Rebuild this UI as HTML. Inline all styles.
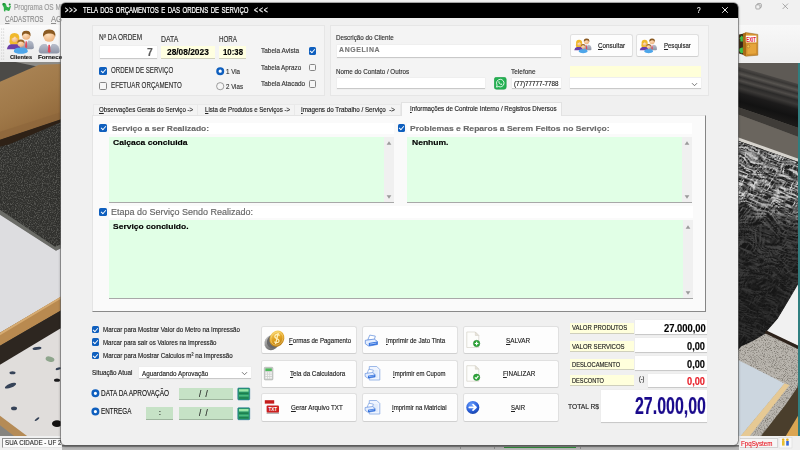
<!DOCTYPE html>
<html lang="pt-BR">
<head>
<meta charset="utf-8">
<title>Tela dos Orçamentos e das Ordens de Serviço</title>
<style>
html,body{margin:0;padding:0;background:#f0f0f0;}
body{width:800px;height:450px;overflow:hidden;font-family:"Liberation Sans",Arial,sans-serif;}
#root{position:relative;width:800px;height:450px;overflow:hidden;background:#f1f1f1;}
#root *{box-sizing:border-box;}
.a{position:absolute;}
.t{position:absolute;white-space:nowrap;transform-origin:0 50%;display:inline-block;-webkit-text-stroke:0.16px currentColor;}
.t u{text-decoration:underline;text-decoration-thickness:0.5px;text-underline-offset:0.5px;}
.gb{position:absolute;background:#f4f4f4;border:1px solid #e6e6e6;}
.in{position:absolute;background:#fff;border-bottom:1px solid #c9c9c9;box-shadow:0 0 0 0.5px #e9e9e9;}
.yl{position:absolute;background:#ffffe1;border-bottom:1px solid #cfcfbc;}
.btn{position:absolute;background:#fdfdfd;border:1px solid #e0e0e0;border-bottom-color:#d0d0d0;border-radius:2.5px;}
.cb{position:absolute;width:7.5px;height:7.5px;border-radius:1.6px;}
.cb.on{background:#0f5fbe;}
.cb.on::after{content:"";position:absolute;left:2.5px;top:1.1px;width:2.1px;height:3.9px;border:solid #fff;border-width:0 0.9px 0.9px 0;transform:rotate(42deg);}
.cb.off{background:#f6f6f6;border:0.8px solid #858585;}
.rd{position:absolute;width:8px;height:8px;border-radius:50%;}
.rd.on{background:#fff;border:2.7px solid #0f5fbe;width:8.4px;height:8.4px;}
.rd.off{background:#f6f6f6;border:0.8px solid #858585;}
.memo{position:absolute;background:#e1ffe6;border-bottom:1px solid #a8a8a8;}
.sb{position:absolute;right:0;top:0;bottom:0;width:10px;background:#f0f0f0;}
.lbl{position:absolute;background:#fff;}
.grn{position:absolute;background:#c6e2c6;border-bottom:1px solid #9db49d;}
</style>
</head>
<body>

<div id="root">
<!-- ===== main application window (behind) ===== -->
<div class="a" id="appbar" style="left:0;top:0;width:800px;height:25px;background:#f1f1f1;"></div>
<div class="a" style="left:0;top:24.5px;width:800px;height:1px;background:#d9d9d9;"></div>
<div class="a" id="tool-l" style="left:0;top:25px;width:70px;height:37px;background:linear-gradient(#fbfbfb,#ececec);"></div>
<div class="a" id="tool-r" style="left:730px;top:25px;width:70px;height:37px;background:linear-gradient(#f8f8f8,#eeeeee);"></div>

<!-- left photo -->
<svg class="a" id="photo-l" style="left:0;top:62.3px;" width="70" height="373.3" viewBox="0 62.3 70 373.3">
  <defs>
    <filter id="nz" color-interpolation-filters="sRGB" x="0" y="0" width="100%" height="100%">
      <feTurbulence type="fractalNoise" baseFrequency="0.85" numOctaves="2" seed="3" result="n"/>
      <feColorMatrix in="n" type="matrix" values="0 0 0 0 0.55  0 0 0 0 0.55  0 0 0 0 0.53  1.3 0 0 0 -0.56"/>
      <feComposite operator="in" in2="SourceGraphic"/>
    </filter>
    <linearGradient id="tan" x1="0" y1="0" x2="0.5" y2="1">
      <stop offset="0" stop-color="#ad8758"/><stop offset="0.55" stop-color="#a07949"/><stop offset="0.85" stop-color="#946c3e"/><stop offset="1" stop-color="#7c572e"/>
    </linearGradient>
  </defs>
  <rect x="0" y="62" width="70" height="375" fill="#3b3a37"/>
  <polygon points="0,62 70,62 70,66 0,84" fill="#4b4a47"/>
  <polygon points="14,62 70,62 70,65 36,66.5" fill="#8d8c88"/>
  <polygon points="0,82 39,65 70,64 70,116.500 0,140" fill="url(#tan)"/>
  <polygon points="0,132 70,109.500 70,116.500 0,140" fill="#8d673c" opacity="0.75"/>
  <polygon points="0,140 70,116.500 70,118.500 11,144 0,150" fill="#2e2116"/>
  <polygon points="0,147 11,144 70,119 70,242 55,247 0,210" fill="#30302d"/>
  <polygon points="0,147 11,144 70,119 70,242 55,247 0,210" fill="#fff" filter="url(#nz)"/>
  <polygon points="0,210 55,247 70,241 70,244 56,251 0,215" fill="#6b6c67"/>
  <polygon points="0,215 56,251 70,244 70,292 0,333" fill="#dddde0"/>
  <polygon points="0,333 70,291.500 70,305.500 0,346" fill="#b98a50"/>
  <polygon points="0,333 70,291.500 70,293.500 0,335.500" fill="#d6ab72"/>
  <polygon points="0,346 70,305.500 70,323 0,365" fill="#2d2620"/>
  <polygon points="0,365 70,323 70,437 0,437" fill="#e0dddb"/>
  <g fill="#364358">
    <ellipse cx="37" cy="348.600" rx="4.500" ry="1.400" transform="rotate(-8 37 348.600)"/>
    <ellipse cx="10.500" cy="386" rx="6" ry="2" transform="rotate(-22 10.500 386)"/>
    <ellipse cx="12.500" cy="373" rx="3" ry="1.500"/>
    <ellipse cx="58.500" cy="369" rx="3" ry="1.200" transform="rotate(-15 58.500 369)"/>
    <ellipse cx="14" cy="408.700" rx="3" ry="1.800"/>
    <ellipse cx="37" cy="419.500" rx="2.800" ry="1" transform="rotate(-35 37 419.500)"/>
  </g>
  <ellipse cx="57" cy="380.500" rx="3" ry="1.600" fill="#1b1a1c"/>
  <ellipse cx="50" cy="359.500" rx="4.500" ry="2.600" fill="#8ea58c" transform="rotate(15 50 359.500)"/>
  <ellipse cx="57" cy="424" rx="5" ry="3.400" fill="#131110"/>
  <polygon points="0,416 28,437 0,437" fill="#b58b56"/>
  <polygon points="0,425.500 15,437 0,437" fill="#85837e"/>
</svg>

<!-- right photo -->
<svg class="a" id="photo-r" style="left:730px;top:62.6px;" width="70" height="373.2" viewBox="730 62.600 70 373.200">
  <defs>
    <linearGradient id="cyl" gradientUnits="userSpaceOnUse" x1="762" y1="73" x2="751" y2="112">
      <stop offset="0" stop-color="#4c4946"/><stop offset="0.08" stop-color="#393735"/><stop offset="0.16" stop-color="#575450"/><stop offset="0.24" stop-color="#333130"/><stop offset="0.32" stop-color="#4f4c49"/><stop offset="0.4" stop-color="#2b2a29"/><stop offset="0.5" stop-color="#3b3937"/><stop offset="0.62" stop-color="#1c1b1b"/><stop offset="0.82" stop-color="#121212"/><stop offset="1" stop-color="#1b1a19"/>
    </linearGradient>
    <filter id="fur" color-interpolation-filters="sRGB" x="0" y="0" width="100%" height="100%">
      <feTurbulence type="fractalNoise" baseFrequency="0.07 0.85" numOctaves="3" seed="8" result="n"/>
      <feTurbulence type="fractalNoise" baseFrequency="0.035" numOctaves="2" seed="2" result="d"/>
      <feDisplacementMap in="n" in2="d" scale="18" xChannelSelector="R" yChannelSelector="G" result="w"/>
      <feColorMatrix in="w" type="matrix" values="0 0 0 0 0.85  0 0 0 0 0.85  0 0 0 0 0.85  3.6 0 0 0 -1.5"/>
      <feComposite operator="in" in2="SourceGraphic"/>
    </filter>
    <filter id="fur2" color-interpolation-filters="sRGB" x="0" y="0" width="100%" height="100%">
      <feTurbulence type="fractalNoise" baseFrequency="0.1 0.95" numOctaves="2" seed="21" result="n"/>
      <feTurbulence type="fractalNoise" baseFrequency="0.03" numOctaves="2" seed="5" result="d"/>
      <feDisplacementMap in="n" in2="d" scale="22" xChannelSelector="G" yChannelSelector="R" result="w"/>
      <feColorMatrix in="w" type="matrix" values="0 0 0 0 0.9  0 0 0 0 0.9  0 0 0 0 0.9  4 0 0 0 -2.1"/>
      <feComposite operator="in" in2="SourceGraphic"/>
    </filter>
    <filter id="gr" color-interpolation-filters="sRGB" x="0" y="0" width="100%" height="100%">
      <feTurbulence type="fractalNoise" baseFrequency="1.1" numOctaves="2" seed="5" result="n"/>
      <feColorMatrix in="n" type="matrix" values="0 0 0 0 0.3  0 0 0 0 0.28  0 0 0 0 0.25  1.7 0 0 0 -0.8"/>
      <feComposite operator="in" in2="SourceGraphic"/>
    </filter>
  </defs>
  <rect x="730" y="62" width="70" height="375" fill="#1c1c1c"/>
  <rect x="730" y="62" width="70" height="100" fill="#5e5a55"/>
  <polygon points="730,64 800,84 800,128 730,104" fill="url(#cyl)"/>
  <polygon points="730,104 800,128 800,137 730,111" fill="#3f3c38"/>
  <polygon points="730,111 800,137 800,160 730,137" fill="#6a655e"/>
  <polygon points="730,134.200 800,158.800 800,162 730,137.600" fill="#d6d3cd"/>
  <polygon points="730,137.600 800,162 800,283 778,318 766,333 752,341 741,346 730,346" fill="#1d1d1d"/>
  <clipPath id="furclip"><polygon points="730,138 800,162.500 800,283 778,318 766,333 752,341 741,346 730,346"/></clipPath>
  <g clip-path="url(#furclip)"><g transform="rotate(20 768 240)"><rect x="690" y="120" width="160" height="260" fill="#fff" filter="url(#fur)"/></g><g transform="rotate(-55 768 240)"><rect x="640" y="120" width="260" height="260" fill="#fff" filter="url(#fur2)"/></g></g>
  <linearGradient id="furfade" gradientUnits="userSpaceOnUse" x1="760" y1="150" x2="745" y2="300"><stop offset="0" stop-color="#141414" stop-opacity="0.1"/><stop offset="0.3" stop-color="#141414" stop-opacity="0"/><stop offset="0.5" stop-color="#141414" stop-opacity="0.72"/><stop offset="1" stop-color="#141414" stop-opacity="0.85"/></linearGradient>
  <polygon points="730,137.600 800,162 800,283 778,318 766,333 752,341 741,346 730,346" fill="url(#furfade)"/>
  <polygon points="741,346 752,341 766,333 778,318 800,283 800,437 730,437 730,346" fill="#b9b5ae"/>
  <polygon points="741,346 752,341 766,333 778,318 800,283 800,437 730,437 730,346" fill="#fff" filter="url(#gr)"/>
  <polygon points="730,300 741,346 730,360" fill="#1d1d1d"/>
  <polygon points="766.500,331 778,318 798,284 800,283 800,346" fill="#f1f1f1"/>
  <polygon points="766.500,330 800,346 800,349.500 764.500,332.500" fill="#2e231b"/>
  <polygon points="730,355.500 784.400,383 740,436.500 730,437" fill="#ccd6df"/>
  <polygon points="784.400,383 789.500,384.500 749,436.500 740,436.500" fill="#e6c994"/>
  <polygon points="800,383 800,437 760,437 785,405" fill="#4a3e2c"/>
  <polygon points="800,412 800,437 785,437" fill="#dba552"/>
</svg>
<div class="a" style="left:797.5px;top:62.6px;width:3px;height:373.2px;background:#2f7f80;"></div>

<!-- status bar -->
<div class="a" id="status" style="left:0;top:435.6px;width:800px;height:15px;background:#f0f0f0;"></div>
<div class="a" style="left:1.8px;top:438px;width:75px;height:9.6px;background:#fbfbfb;border:1px solid #8f8f8f;border-right-color:#ddd;border-bottom-color:#e4e4e4;"></div>
<div class="a" style="left:740px;top:437.6px;width:38.4px;height:10.4px;background:#f6f6f6;border:1px solid #d4d4d4;border-left:none;"></div>
<div class="a" style="left:62px;top:444.5px;width:677px;height:6px;background:linear-gradient(#6f6f6f 0,#8a8a8a 1.5px,#b3b3b3 2px,#b9b9b9 100%);"></div>
<div class="a" style="left:504px;top:446.6px;width:72px;height:1.2px;background:#2f8f3a;"></div>
<div class="a" style="left:460px;top:446px;width:1px;height:3px;background:#8a8a8a;"></div><div class="a" style="left:494px;top:446px;width:1px;height:3px;background:#8a8a8a;"></div><div class="a" style="left:580px;top:446px;width:1px;height:3px;background:#8a8a8a;"></div>

<!-- ===== dialog ===== -->
<div class="a" id="dlg" style="left:61.4px;top:2.5px;width:677px;height:442px;background:#f0f0f0;border-radius:4.5px;box-shadow:0 0 0 0.6px #6b6b6b,0 1px 3px rgba(0,0,0,.55);overflow:hidden;">
  <div class="a" style="left:0;top:0;width:100%;height:15.2px;background:#000;"></div>
</div>

<!-- group box 1 -->
<div class="gb" style="left:92px;top:24.5px;width:232.5px;height:71.5px;"></div>
<!-- group box 2 -->
<div class="gb" style="left:329.5px;top:24.5px;width:379.2px;height:71.5px;"></div>

<!-- header inputs -->
<div class="in" style="left:100px;top:45.5px;width:56.5px;height:13.5px;"></div>
<div class="yl" style="left:161px;top:45.5px;width:53.5px;height:13px;"></div>
<div class="yl" style="left:218.8px;top:45.5px;width:27.7px;height:13px;"></div>

<div class="cb on"  style="left:99.3px;top:67.2px;"></div>
<div class="cb off" style="left:99.3px;top:82.3px;"></div>
<div class="cb on"  style="left:308.8px;top:47.2px;"></div>
<div class="cb off" style="left:308.8px;top:63.7px;"></div>
<div class="cb off" style="left:308.8px;top:80.2px;"></div>

<div class="in" style="left:337px;top:45px;width:223.5px;height:12.5px;"></div>
<div class="in" style="left:337px;top:77.8px;width:147.5px;height:11.7px;"></div>
<div class="in" style="left:512px;top:77.8px;width:48.5px;height:11.7px;"></div>
<div class="a"  style="left:569.5px;top:66px;width:131px;height:10.5px;background:#ffffd9;"></div>
<div class="in" style="left:569.5px;top:77.8px;width:131px;height:11.7px;"></div>
<svg class="a" style="left:690.5px;top:81.5px;" width="7" height="5" viewBox="0 0 7 5"><path d="M1 1.2 L3.5 3.7 L6 1.2" fill="none" stroke="#555" stroke-width="0.8"/></svg>

<!-- whatsapp -->
<svg class="a" style="left:494px;top:77.3px;" width="12.5" height="12.5" viewBox="0 0 25 25">
  <rect x="0.5" y="0.5" width="24" height="24" rx="4.5" fill="#24b152"/>
  <rect x="0.5" y="0.5" width="24" height="24" rx="4.5" fill="none" stroke="#17903f" stroke-width="1"/>
  <path d="M12.6 4.6a7.6 7.6 0 0 0-6.5 11.5L5 20.2l4.2-1.1a7.6 7.6 0 1 0 3.4-14.5z" fill="none" stroke="#fff" stroke-width="1.7"/>
  <path d="M9.6 8.4c-.5.5-1 1.300-.5 2.600.7 1.800 2.500 3.700 4.700 4.500 1.100.4 1.900-.1 2.400-.7.300-.4.200-.8-.1-1l-1.500-.8c-.3-.1-.6 0-.8.300l-.4.500c-1.300-.5-2.300-1.500-2.900-2.700l.5-.5c.2-.2.300-.5.100-.8L10.400 8.400c-.2-.3-.6-.3-.8 0z" fill="#fff"/>
</svg>

<!-- consult / search buttons -->
<div class="btn" style="left:570px;top:33.6px;width:63.3px;height:23.8px;"></div>
<div class="btn" style="left:635.6px;top:33.6px;width:63.3px;height:23.8px;"></div>

<!-- tab strip -->
<div class="a" style="left:92.5px;top:103.5px;width:105px;height:12px;background:#f3f3f3;border:1px solid #e9e9e9;border-bottom:none;"></div>
<div class="a" style="left:197.5px;top:103.5px;width:97px;height:12px;background:#f3f3f3;border:1px solid #e9e9e9;border-bottom:none;border-left:none;"></div>
<div class="a" style="left:294.5px;top:103.5px;width:106px;height:12px;background:#f3f3f3;border:1px solid #e9e9e9;border-bottom:none;border-left:none;"></div>
<!-- tab page -->
<div class="a" id="page" style="left:92.2px;top:115px;width:613.8px;height:197px;background:#fafafa;border:1px solid #e4e4e4;border-right:1.6px solid #858585;border-bottom:1.8px solid #8a8a8a;"></div>
<div class="a" style="left:400.5px;top:102.2px;width:161px;height:13.8px;background:#fafafa;border:1px solid #e2e2e2;border-bottom:none;"></div>

<!-- section 1 -->
<div class="cb on" style="left:99.3px;top:124.2px;"></div>
<div class="lbl" style="left:109px;top:122.8px;width:285px;height:10.8px;"></div>
<div class="memo" style="left:109px;top:136.7px;width:285px;height:66.3px;"><div class="sb"></div></div>
<!-- section 2 -->
<div class="cb on" style="left:397.5px;top:124.2px;"></div>
<div class="lbl" style="left:407px;top:122.8px;width:285px;height:10.8px;"></div>
<div class="memo" style="left:407px;top:136.7px;width:285px;height:66.3px;"><div class="sb"></div></div>
<!-- section 3 -->
<div class="cb on" style="left:99.2px;top:208.3px;"></div>
<div class="lbl" style="left:109px;top:206px;width:584px;height:11.5px;"></div>
<div class="memo" style="left:109px;top:219.8px;width:584px;height:79.2px;"><div class="sb"></div></div>

<!-- scrollbar arrows -->
<svg class="a" style="left:0;top:0;" width="800" height="450" viewBox="0 0 800 450" pointer-events="none">
  <g fill="#9a9a9a">
    <polygon points="386.6,144.7 391.4,144.7 389,141.3"/>
    <polygon points="386.6,195.3 391.4,195.3 389,198.7"/>
    <polygon points="684.6,144.7 689.4,144.7 687,141.3"/>
    <polygon points="684.6,195.3 689.4,195.3 687,198.7"/>
    <polygon points="685.6,228.7 690.4,228.7 688,225.3"/>
    <polygon points="685.6,291.3 690.4,291.3 688,294.7"/>
  </g>
</svg>

<!-- bottom-left options -->
<div class="cb on" style="left:91.5px;top:325.5px;"></div>
<div class="cb on" style="left:91.5px;top:338.4px;"></div>
<div class="cb on" style="left:91.5px;top:351.6px;"></div>
<div class="in" style="left:139.2px;top:367.3px;width:111.4px;height:11.5px;"></div>
<svg class="a" style="left:241px;top:371px;" width="7" height="5" viewBox="0 0 7 5"><path d="M1 1.2 L3.5 3.7 L6 1.2" fill="none" stroke="#555" stroke-width="0.8"/></svg>
<div class="grn" style="left:178.5px;top:387.8px;width:54px;height:12.4px;"></div>
<div class="grn" style="left:145.8px;top:407.2px;width:27.6px;height:12.4px;"></div>
<div class="grn" style="left:178.5px;top:407.2px;width:54px;height:12.4px;"></div>

<!-- action buttons -->
<div class="btn" style="left:260.8px;top:325.9px;width:96.6px;height:28.6px;"></div>
<div class="btn" style="left:260.8px;top:359.6px;width:96.6px;height:28.5px;"></div>
<div class="btn" style="left:260.8px;top:393.4px;width:96.6px;height:28.5px;"></div>
<div class="btn" style="left:361.5px;top:325.9px;width:96.6px;height:28.6px;"></div>
<div class="btn" style="left:361.5px;top:359.6px;width:96.6px;height:28.5px;"></div>
<div class="btn" style="left:361.5px;top:393.4px;width:96.6px;height:28.5px;"></div>
<div class="btn" style="left:462.7px;top:325.9px;width:96.8px;height:28.6px;"></div>
<div class="btn" style="left:462.7px;top:359.6px;width:96.8px;height:28.5px;"></div>
<div class="btn" style="left:462.7px;top:393.4px;width:96.8px;height:28.5px;"></div>

<!-- totals -->
<div class="yl" style="left:570px;top:323.4px;width:63.6px;height:11px;background:#ffffdc;"></div>
<div class="yl" style="left:570px;top:341px;width:63.6px;height:11.2px;background:#ffffdc;"></div>
<div class="yl" style="left:570px;top:359px;width:63.6px;height:11px;background:#ffffdc;"></div>
<div class="yl" style="left:570px;top:375.2px;width:63.6px;height:11.2px;background:#ffffdc;"></div>
<div class="in" style="left:635px;top:320px;width:72.2px;height:15px;"></div>
<div class="in" style="left:635px;top:337.6px;width:72.2px;height:15.4px;"></div>
<div class="in" style="left:635px;top:356px;width:72.2px;height:15px;"></div>
<div class="in" style="left:648px;top:373.6px;width:59.2px;height:14.4px;"></div>
<div class="in" style="left:601px;top:390.2px;width:106.2px;height:32.6px;"></div>
<!-- ===== icons layer ===== -->
<svg class="a" style="left:0;top:0;" width="800" height="450" viewBox="0 0 800 450">
  <defs>
    <radialGradient id="skin" cx="0.4" cy="0.35" r="0.8"><stop offset="0" stop-color="#ffe2c0"/><stop offset="1" stop-color="#e8a870"/></radialGradient>
    <linearGradient id="suit" x1="0" y1="0" x2="0" y2="1"><stop offset="0" stop-color="#b9bfcc"/><stop offset="1" stop-color="#8d94a6"/></linearGradient>
    <linearGradient id="gold" x1="0" y1="0" x2="1" y2="1"><stop offset="0" stop-color="#ffe27a"/><stop offset="0.5" stop-color="#e0a020"/><stop offset="1" stop-color="#a86a08"/></linearGradient>
    <linearGradient id="silver" x1="0" y1="0" x2="1" y2="1"><stop offset="0" stop-color="#d8d8d8"/><stop offset="0.6" stop-color="#8a8a8a"/><stop offset="1" stop-color="#5a5a5a"/></linearGradient>
    <radialGradient id="blueball" cx="0.4" cy="0.3" r="0.8"><stop offset="0" stop-color="#6aa0ff"/><stop offset="0.6" stop-color="#2a5fd8"/><stop offset="1" stop-color="#123a9a"/></radialGradient>
    <!-- family icon, 32 x 28 box -->
    <g id="family">
      <!-- man (back right) -->
      <path d="M15.500 22.500 L16 15.500 Q16.500 13.300 19.500 13 L25.500 13 Q29.500 13.500 30.300 17 L30.800 21 Q30.600 22.600 28.500 22.600 Z" fill="url(#suit)"/>
      <path d="M19.800 12.800 L22.200 17.500 L24.600 12.800 Z" fill="#fff"/>
      <path d="M21.500 13.800 L22.900 13.800 L23.400 20 L22.200 22 L21 20 Z" fill="#e04a5a"/>
      <circle cx="22.200" cy="7.600" r="4.500" fill="url(#skin)"/>
      <path d="M17.500 8 Q16.800 2.200 22.200 2.300 Q27.800 2.200 27 8.200 Q25.800 5.200 22.600 5.400 Q20 5 17.500 8 Z" fill="#8a5a22"/>
      <!-- woman (left) -->
      <path d="M4 11.500 Q3.200 4.600 9.200 4.600 Q15.200 4.600 14.600 11.500 Q15.600 15 13.800 17.800 L4.800 17.800 Q2.600 15 4 11.500 Z" fill="#f0b92c"/>
      <path d="M0.800 22.600 Q1.500 18 5.500 17.200 L12.500 17.200 Q15.500 18 16 22.600 Z" fill="#6b3fa8"/>
      <circle cx="9.400" cy="11.400" r="3.500" fill="url(#skin)"/>
      <path d="M5.600 11 Q5.800 7 9.400 7 Q13 7 13.300 11 Q11 10 9.700 8.200 Q8.400 10.300 5.600 11 Z" fill="#f0b92c"/>
      <!-- child (front) -->
      <path d="M8.500 25.500 Q8.500 21.500 12.500 21 L20 21 Q24 21.500 24 25.500 Q22 27.800 16.200 27.800 Q10.500 27.800 8.500 25.500 Z" fill="#4ea6ea"/>
      <circle cx="16.300" cy="16.200" r="3.700" fill="url(#skin)"/>
      <path d="M12.400 16.400 Q12 11.800 16.300 11.800 Q20.700 11.800 20.300 16.400 Q18.800 14.200 16.300 14.200 Q13.800 14.200 12.400 16.400 Z" fill="#9a6426"/>
    </g>
    <!-- single man icon, 22 x 26 box -->
    <g id="man">
      <path d="M0.300 23 Q0.800 17 5 15.800 L17 15.800 Q21.200 17 21.700 23 Q21.500 25.800 19 25.800 L3 25.800 Q0.500 25.800 0.300 23 Z" fill="url(#suit)"/>
      <path d="M8 15.600 L11 20.500 L14 15.600 Z" fill="#fff"/>
      <path d="M10.200 16.600 L11.800 16.600 L12.400 23.500 L11 25.500 L9.600 23.500 Z" fill="#e04a5a"/>
      <circle cx="11" cy="7.600" r="5.900" fill="url(#skin)"/>
      <path d="M4.800 8.200 Q4 0.400 11 0.600 Q18 0.400 17.200 8.200 Q15.500 4.200 11.500 4.800 Q7.500 4 4.800 8.200 Z" fill="#8a5a22"/>
    </g>
    <!-- printer 14 x 12 -->
    <g id="printer">
      <path d="M3.500 5.500 L5.500 0.800 L11 1.800 L9.800 6.500 Z" fill="#fff" stroke="#6f98de" stroke-width="0.8"/>
      <path d="M1 6 L10 4.800 L13.200 7.200 L13.200 10.200 L4.500 11.800 L1 9.500 Z" fill="#e4eeff" stroke="#5f8cdc" stroke-width="0.8"/>
      <path d="M4.500 8.600 L13.200 7.200 L13.200 10.200 L4.500 11.800 Z" fill="#2f6fdc"/>
      <path d="M5.500 9.800 L12.200 8.700" stroke="#cfe0ff" stroke-width="0.7"/>
    </g>
    <!-- doc + printer 16 x 15 -->
    <g id="docprint">
      <path d="M5 0.500 L12.500 0.500 L15.500 3.500 L15.500 14 L5 14 Z" fill="#f0f5ff" stroke="#86a8e2" stroke-width="0.8"/>
      <path d="M7 5 H13.500 M7 7 H13.500 M7 9 H13.500 M7 11 H13.500" stroke="#c4d6f2" stroke-width="0.6"/>
      <g transform="translate(0,2.600) scale(0.82)"><use href="#printer"/></g>
    </g>
    <!-- document 14 x 17 -->
    <g id="doc">
      <path d="M0.500 0.500 L9 0.500 L12.500 4 L12.500 16 L0.500 16 Z" fill="#fdfdfb" stroke="#d6d3c8" stroke-width="0.7"/>
      <path d="M9 0.500 L9 4 L12.500 4 Z" fill="#e6e3d8" stroke="#d0cdc2" stroke-width="0.5"/>
    </g>
    <!-- calendar/calc small green 12.5 box -->
    <g id="cal">
      <rect x="0.300" y="0.300" width="11.900" height="11.900" rx="0.800" fill="#2a9a6a" stroke="#1c6f96" stroke-width="0.600"/>
      <rect x="1.500" y="1.500" width="9.500" height="2.400" fill="#9be6a8"/>
      <rect x="1.500" y="5" width="9.500" height="1.400" fill="#1c7f4c"/>
      <rect x="1.500" y="7.300" width="9.500" height="1.400" fill="#4dbb7c"/>
      <rect x="1.500" y="9.600" width="9.500" height="1.400" fill="#1c7f4c"/>
    </g>
  </defs>

  <!-- app icon -->
  <g transform="translate(1.500,2.200)">
    <path d="M1.500 1 Q3.800 0.200 4.600 2.200 L5.300 4.600 L7.200 5.400 L8.600 3.600 Q9.600 3.400 9.300 4.600 L8.300 7.800 Q7.800 9 6.500 8.600 L4 7.800 L3.800 9.200 Q2.600 9.600 2.400 8.400 L2.300 5.200 L0.800 2.600 Q0.600 1.400 1.500 1 Z" fill="#2fb04a"/>
    <circle cx="2.200" cy="1.800" r="1" fill="#1d8a35"/>
    <circle cx="8.200" cy="2.400" r="1" fill="#1d8a35"/>
  </g>
  <!-- toolbar grip dots -->
  <g fill="#bdbdbd">
    <circle cx="1.700" cy="29" r="0.500"/><circle cx="1.700" cy="32" r="0.500"/><circle cx="1.700" cy="35" r="0.500"/><circle cx="1.700" cy="38" r="0.500"/><circle cx="1.700" cy="41" r="0.500"/><circle cx="1.700" cy="44" r="0.500"/><circle cx="1.700" cy="47" r="0.500"/><circle cx="1.700" cy="50" r="0.500"/><circle cx="1.700" cy="53" r="0.500"/><circle cx="1.700" cy="56" r="0.500"/><circle cx="1.700" cy="59" r="0.500"/>
    <circle cx="3.700" cy="29" r="0.500"/><circle cx="3.700" cy="32" r="0.500"/><circle cx="3.700" cy="35" r="0.500"/><circle cx="3.700" cy="38" r="0.500"/><circle cx="3.700" cy="41" r="0.500"/><circle cx="3.700" cy="44" r="0.500"/><circle cx="3.700" cy="47" r="0.500"/><circle cx="3.700" cy="50" r="0.500"/><circle cx="3.700" cy="53" r="0.500"/><circle cx="3.700" cy="56" r="0.500"/><circle cx="3.700" cy="59" r="0.500"/>
  </g>
  <!-- toolbar: clientes / fornecedores -->
  <g transform="translate(6.200,28.800) scale(0.9)"><use href="#family"/></g>
  <g transform="translate(38.400,29) scale(0.98,0.95)"><use href="#man"/></g>

  <!-- consult / search icons -->
  <g transform="translate(573.800,37.200) scale(0.575)"><use href="#family"/></g>
  <g transform="translate(639.300,37.200) scale(0.575)"><use href="#family"/></g>

  <!-- coin -->
  <g>
    <ellipse cx="271.600" cy="342.600" rx="7" ry="7.800" transform="rotate(28 271.600 342.600)" fill="url(#silver)"/>
    <ellipse cx="273" cy="341.600" rx="6" ry="6.800" transform="rotate(28 273 341.600)" fill="#6a6a6a"/>
    <ellipse cx="276.900" cy="338.600" rx="7.200" ry="8.300" transform="rotate(28 276.900 338.600)" fill="url(#gold)"/>
    <ellipse cx="276.900" cy="338.600" rx="5.800" ry="6.800" transform="rotate(28 276.900 338.600)" fill="none" stroke="#ffe9a0" stroke-width="0.600" opacity="0.700"/>
    <path d="M279.600 335.400 Q277.200 333.600 275.200 335.300 Q273.800 337.300 277 338.700 Q280 340 278.600 342 Q276.600 343.500 274.200 341.700 M278.300 333 L275.500 344.200" fill="none" stroke="#fff0b8" stroke-width="1.200"/>
  </g>
  <!-- calculator -->
  <g>
    <rect x="264.300" y="367.300" width="8.600" height="12.600" rx="0.900" fill="#cfd2cf" stroke="#a3a6a3" stroke-width="0.600"/>
    <rect x="265.400" y="368.400" width="6.400" height="2.600" fill="#4cba5a"/>
    <g fill="#f6f6f6"><rect x="265.400" y="372.200" width="1.600" height="1.500"/><rect x="267.800" y="372.200" width="1.600" height="1.500"/><rect x="270.200" y="372.200" width="1.600" height="1.500"/><rect x="265.400" y="374.600" width="1.600" height="1.500"/><rect x="267.800" y="374.600" width="1.600" height="1.500"/><rect x="270.200" y="374.600" width="1.600" height="1.500"/><rect x="265.400" y="377" width="1.600" height="1.500"/><rect x="267.800" y="377" width="1.600" height="1.500"/><rect x="270.200" y="377" width="1.600" height="1.500"/></g>
  </g>
  <!-- TXT icon -->
  <g>
    <rect x="264.800" y="400.200" width="9.400" height="3.600" fill="#c41c1c"/>
    <rect x="264.800" y="403.800" width="9.400" height="1.600" fill="#f6f6f6"/>
    <rect x="266.600" y="412.200" width="12.400" height="1.800" fill="#b5b5b5"/>
    <rect x="266.600" y="405.600" width="12.400" height="6.800" rx="1" fill="#cc1f1f"/>
    <text x="272.800" y="411" font-family="Liberation Sans, Arial, sans-serif" font-size="4.600" font-weight="bold" fill="#fff" text-anchor="middle">TXT</text>
  </g>
  <!-- printers -->
  <g transform="translate(364.300,334.300)"><use href="#printer"/></g>
  <g transform="translate(364.300,366)"><use href="#docprint"/></g>
  <g transform="translate(364.300,400)"><use href="#docprint"/></g>
  <!-- save / finish / exit -->
  <g transform="translate(466.300,331.500)"><use href="#doc"/></g>
  <circle cx="476.600" cy="343.500" r="3.200" fill="#2fa83a" stroke="#1c7a26" stroke-width="0.500"/>
  <path d="M474.800 343.500 H478.400 M476.600 341.700 V345.300" stroke="#fff" stroke-width="1.200"/>
  <g transform="translate(466.300,365.200)"><use href="#doc"/></g>
  <circle cx="476.600" cy="377.300" r="3.200" fill="#2fa83a" stroke="#1c7a26" stroke-width="0.500"/>
  <path d="M474.900 377.300 L476.200 378.700 L478.400 375.900" fill="none" stroke="#fff" stroke-width="1.100"/>
  <circle cx="472.800" cy="407.400" r="6.500" fill="url(#blueball)"/>
  <path d="M469.300 407.400 H475.300 M473 404.600 L476 407.400 L473 410.200" fill="none" stroke="#fff" stroke-width="1.700" stroke-linejoin="round" stroke-linecap="round"/>

  <!-- calendar buttons -->
  <g transform="translate(237.500,387.700)"><use href="#cal"/></g>
  <g transform="translate(237.500,407.500)"><use href="#cal"/></g>

  <!-- radio buttons -->
  <g fill="#fff" stroke="#0f5fbe" stroke-width="2.400">
    <circle cx="95.400" cy="393.300" r="2.800"/>
    <circle cx="95.400" cy="411.600" r="2.800"/>
    <circle cx="220.200" cy="71.200" r="2.800"/>
  </g>
  <circle cx="220.200" cy="86.200" r="3.600" fill="#f6f6f6" stroke="#858585" stroke-width="0.800"/>
  <!-- dialog title buttons -->
  <path d="M722.200 7.200 L727.800 12.800 M727.800 7.200 L722.200 12.800" stroke="#fff" stroke-width="0.900"/>
  <!-- main window controls -->
  <rect x="755.800" y="4.800" width="4.200" height="4.200" rx="0.900" fill="none" stroke="#8a8a8a" stroke-width="0.700"/>
  <path d="M757.200 4.800 V4.300 Q757.200 3.600 758 3.600 H760.400 Q761.300 3.600 761.300 4.500 V6.800 Q761.300 7.600 760.500 7.600 H760" fill="none" stroke="#8a8a8a" stroke-width="0.700"/>
  <path d="M782.600 3.600 L788 9 M788 3.600 L782.600 9" stroke="#8a8a8a" stroke-width="0.700"/>

  <!-- exit door -->
  <g>
    <path d="M739 34.500 L744 33.500 L744 55 L739 53.500 Z" fill="#3a2a18"/>
    <path d="M739.300 38.500 L741.800 35.600 L744 38.200 L742.800 38.600 L743 41.400 L740.400 41.600 L740.400 38.800 Z" fill="#3fc04a"/>
    <path d="M739.600 48.600 L742.600 47.200 L744.200 52.600 L741 53.400 L739.400 51 Z" fill="#3fc04a"/>
    <path d="M743.300 33.800 L746 32.600 L757.800 34.400 L757.800 55.200 L746 56.200 L743.300 54.800 Z" fill="#d9952f" stroke="#8f5f18" stroke-width="0.500"/>
    <path d="M743.300 33.800 L746 32.600 L746 56.200 L743.300 54.800 Z" fill="#a86a16"/>
    <path d="M747 43.800 L756.600 43.400 L756.600 53.800 L747 54.600 Z" fill="#e6a53c" stroke="#b87a20" stroke-width="0.400"/>
    <rect x="745.800" y="35.600" width="10.600" height="6.800" fill="#fff"/>
    <text x="746.200" y="41.500" font-family="Liberation Sans, Arial, sans-serif" font-size="6.400" font-weight="bold" fill="#e0182c" textLength="9.800" lengthAdjust="spacingAndGlyphs">EXIT</text>
    <circle cx="748.300" cy="46.400" r="1.500" fill="#f0c050" stroke="#8f5f18" stroke-width="0.400"/>
  </g>
  <!-- status bar tiny icon -->
  <g>
    <rect x="779" y="437.600" width="13" height="10.400" fill="#f8f8f8" stroke="#d6d6d6" stroke-width="0.500"/>
    <circle cx="783.200" cy="439.800" r="1.300" fill="#e8b020"/><rect x="782" y="441" width="2.600" height="4.600" fill="#e8c030"/>
    <circle cx="787.400" cy="439.800" r="1.300" fill="#e8b020"/><rect x="786.200" y="441" width="2.600" height="4.600" fill="#3a6ad8"/>
  </g>
</svg>

<!-- text layer -->
<span class="t" style="left:64.6px;top:5.81px;font-size:8.14px;line-height:9.77px;font-weight:normal;color:#fff;transform:scaleX(0.7173);letter-spacing:1.2px;-webkit-text-stroke:0.2px #fff;">&gt;&gt;&gt;</span>
<span class="t" style="left:82.5px;top:5.41px;font-size:8.81px;line-height:10.57px;font-weight:normal;color:#fff;transform:scaleX(0.6832);word-spacing:1.2px;-webkit-text-stroke:0.22px #fff;">TELA DOS ORÇAMENTOS E DAS ORDENS DE SERVIÇO</span>
<span class="t" style="left:253.8px;top:5.81px;font-size:8.14px;line-height:9.77px;font-weight:normal;color:#fff;transform:scaleX(0.8294);letter-spacing:1.2px;-webkit-text-stroke:0.2px #fff;">&lt;&lt;&lt;</span>
<span class="t" style="left:696.8px;top:5.14px;font-size:8.6px;line-height:10.32px;font-weight:normal;color:#fff;transform:scaleX(0.7529);">?</span>
<span class="t" style="left:13.9px;top:2.04px;font-size:8.59px;line-height:10.31px;font-weight:normal;color:#9a9a9a;transform:scaleX(0.7566);">Programa OS M</span>
<span class="t" style="left:5px;top:13.84px;font-size:8.59px;line-height:10.31px;font-weight:normal;color:#8d8d8d;transform:scaleX(0.7209);"><u>C</u>ADASTROS</span>
<span class="t" style="left:51px;top:13.84px;font-size:8.59px;line-height:10.31px;font-weight:normal;color:#8d8d8d;transform:scaleX(0.8855);"><u>A</u>G</span>
<span class="t" style="left:9.8px;top:53.9px;font-size:6.0px;line-height:7.2px;font-weight:bold;color:#1a1a1a;transform:scaleX(0.9510);font-family:"DejaVu Sans","Liberation Sans",sans-serif;-webkit-text-stroke:0.35px #1a1a1a;">Clientes</span>
<span class="t" style="left:38.2px;top:53.9px;font-size:6.0px;line-height:7.2px;font-weight:bold;color:#1a1a1a;transform:scaleX(1.0367);font-family:"DejaVu Sans","Liberation Sans",sans-serif;-webkit-text-stroke:0.35px #1a1a1a;">Fornece</span>
<span class="t" style="left:4.5px;top:437.86px;font-size:7.91px;line-height:9.49px;font-weight:normal;color:#333;transform:scaleX(0.7840);">SUA CIDADE - UF 2</span>
<span class="t" style="left:740.6px;top:438.75px;font-size:7.91px;line-height:9.49px;font-weight:normal;color:#e8202a;transform:scaleX(0.7853);">FpqSystem</span>
<span class="t" style="left:99px;top:33.12px;font-size:8.14px;line-height:9.77px;font-weight:normal;color:#333;transform:scaleX(0.7899);">Nº DA ORDEM</span>
<span class="t" style="left:161.3px;top:34.62px;font-size:8.14px;line-height:9.77px;font-weight:normal;color:#333;transform:scaleX(0.8403);">DATA</span>
<span class="t" style="left:219px;top:34.62px;font-size:8.14px;line-height:9.77px;font-weight:normal;color:#333;transform:scaleX(0.7665);">HORA</span>
<span class="t" style="left:147px;top:46.58px;font-size:10.2px;line-height:12.24px;font-weight:bold;color:#5a5a5a;transform:scaleX(1.0226);">7</span>
<span class="t" style="left:167px;top:46.24px;font-size:9.6px;line-height:11.52px;font-weight:bold;color:#000;transform:scaleX(0.8705);">28/08/2023</span>
<span class="t" style="left:223px;top:46.24px;font-size:9.6px;line-height:11.52px;font-weight:bold;color:#000;transform:scaleX(0.8148);">10:38</span>
<span class="t" style="left:110.8px;top:66.11px;font-size:8.14px;line-height:9.77px;font-weight:normal;color:#333;transform:scaleX(0.7542);">ORDEM DE SERVIÇO</span>
<span class="t" style="left:110.8px;top:81.11px;font-size:8.14px;line-height:9.77px;font-weight:normal;color:#333;transform:scaleX(0.7615);">EFETUAR ORÇAMENTO</span>
<span class="t" style="left:226.3px;top:66.55px;font-size:7.91px;line-height:9.49px;font-weight:normal;color:#333;transform:scaleX(0.7825);">1 Via</span>
<span class="t" style="left:226.3px;top:81.55px;font-size:7.91px;line-height:9.49px;font-weight:normal;color:#333;transform:scaleX(0.7783);">2 Vias</span>
<span class="t" style="left:260.8px;top:46.46px;font-size:7.91px;line-height:9.49px;font-weight:normal;color:#333;transform:scaleX(0.8223);">Tabela Avista</span>
<span class="t" style="left:260.8px;top:62.85px;font-size:7.91px;line-height:9.49px;font-weight:normal;color:#333;transform:scaleX(0.8022);">Tabela Aprazo</span>
<span class="t" style="left:260.8px;top:79.25px;font-size:7.91px;line-height:9.49px;font-weight:normal;color:#333;transform:scaleX(0.8173);">Tabela Atacado</span>
<span class="t" style="left:336.3px;top:33.26px;font-size:7.91px;line-height:9.49px;font-weight:normal;color:#333;transform:scaleX(0.7909);">Descrição do Cliente</span>
<span class="t" style="left:338.8px;top:46.06px;font-size:7.4px;line-height:8.88px;font-weight:bold;color:#777;transform:scaleX(0.9321);letter-spacing:0.7px;">ANGELINA</span>
<span class="t" style="left:336.3px;top:67.05px;font-size:7.91px;line-height:9.49px;font-weight:normal;color:#333;transform:scaleX(0.7931);">Nome do Contato / Outros</span>
<span class="t" style="left:510.5px;top:67.05px;font-size:7.91px;line-height:9.49px;font-weight:normal;color:#333;transform:scaleX(0.8192);">Telefone</span>
<span class="t" style="left:514px;top:78.55px;font-size:7.91px;line-height:9.49px;font-weight:normal;color:#222;transform:scaleX(0.7907);">(77)77777-7788</span>
<span class="t" style="left:598px;top:41.26px;font-size:7.91px;line-height:9.49px;font-weight:normal;color:#222;transform:scaleX(0.7974);"><u>C</u>onsultar</span>
<span class="t" style="left:663.5px;top:41.26px;font-size:7.91px;line-height:9.49px;font-weight:normal;color:#222;transform:scaleX(0.7620);"><u>P</u>esquisar</span>
<span class="t" style="left:99px;top:104.95px;font-size:7.91px;line-height:9.49px;font-weight:normal;color:#222;transform:scaleX(0.7780);"><u>O</u>bservações Gerais do Serviço -&gt;</span>
<span class="t" style="left:205px;top:104.95px;font-size:7.91px;line-height:9.49px;font-weight:normal;color:#222;transform:scaleX(0.7720);"><u>L</u>ista de Produtos e Serviços -&gt;</span>
<span class="t" style="left:301px;top:104.95px;font-size:7.91px;line-height:9.49px;font-weight:normal;color:#222;transform:scaleX(0.7906);"><u>I</u>magens do Trabalho / Serviço &nbsp;-&gt;</span>
<span class="t" style="left:409.5px;top:104.05px;font-size:7.91px;line-height:9.49px;font-weight:normal;color:#222;transform:scaleX(0.7862);"><u>I</u>nformações de Controle Interno / Registros Diversos</span>
<span class="t" style="left:111.6px;top:123.66px;font-size:7.9px;line-height:9.48px;font-weight:bold;color:#6a6a6a;transform:scaleX(1.0683);">Serviço a ser Realizado:</span>
<span class="t" style="left:409.5px;top:123.66px;font-size:7.9px;line-height:9.48px;font-weight:bold;color:#6a6a6a;transform:scaleX(1.0831);">Problemas e Reparos a Serem Feitos no Serviço:</span>
<span class="t" style="left:110.5px;top:206.67px;font-size:9.38px;line-height:11.26px;font-weight:normal;color:#666;transform:scaleX(0.9594);">Etapa do Serviço Sendo Realizado:</span>
<span class="t" style="left:112.5px;top:137.92px;font-size:7.8px;line-height:9.36px;font-weight:bold;color:#000;transform:scaleX(1.0948);">Calçaca concluida</span>
<span class="t" style="left:411.5px;top:137.92px;font-size:7.8px;line-height:9.36px;font-weight:bold;color:#000;transform:scaleX(1.0941);">Nenhum.</span>
<span class="t" style="left:112.5px;top:221.92px;font-size:7.8px;line-height:9.36px;font-weight:bold;color:#000;transform:scaleX(1.0890);">Serviço concluido.</span>
<span class="t" style="left:102.7px;top:324.89px;font-size:7.68px;line-height:9.22px;font-weight:normal;color:#222;transform:scaleX(0.8054);">Marcar para Mostrar Valor do Metro na Impressão</span>
<span class="t" style="left:102.7px;top:337.59px;font-size:7.68px;line-height:9.22px;font-weight:normal;color:#222;transform:scaleX(0.7977);">Marcar para sair os Valores na Impressão</span>
<span class="t" style="left:102.7px;top:350.89px;font-size:7.68px;line-height:9.22px;font-weight:normal;color:#222;transform:scaleX(0.8069);">Marcar para Mostrar Calculos m² na Impressão</span>
<span class="t" style="left:91.5px;top:368.19px;font-size:7.68px;line-height:9.22px;font-weight:normal;color:#222;transform:scaleX(0.8255);">Situação Atual</span>
<span class="t" style="left:141.6px;top:368.79px;font-size:7.68px;line-height:9.22px;font-weight:normal;color:#222;transform:scaleX(0.8254);">Aguardando Aprovação</span>
<span class="t" style="left:101px;top:388.62px;font-size:8.14px;line-height:9.77px;font-weight:normal;color:#222;transform:scaleX(0.7926);">DATA DA APROVAÇÃO</span>
<span class="t" style="left:101px;top:406.92px;font-size:8.14px;line-height:9.77px;font-weight:normal;color:#222;transform:scaleX(0.7739);">ENTREGA</span>
<span class="t" style="left:198.6px;top:388.65px;font-size:8.59px;line-height:10.31px;font-weight:normal;color:#222;transform:scaleX(0.9218);">/&nbsp; /</span>
<span class="t" style="left:198.6px;top:407.85px;font-size:8.59px;line-height:10.31px;font-weight:normal;color:#222;transform:scaleX(0.9218);">/&nbsp; /</span>
<span class="t" style="left:158.6px;top:408.24px;font-size:7.6px;line-height:9.12px;font-weight:bold;color:#222;transform:scaleX(0.7111);">:</span>
<span class="t" style="left:288.9px;top:335.75px;font-size:7.91px;line-height:9.49px;font-weight:normal;color:#222;transform:scaleX(0.7720);"><u>F</u>ormas de Pagamento</span>
<span class="t" style="left:289.8px;top:369.25px;font-size:7.91px;line-height:9.49px;font-weight:normal;color:#222;transform:scaleX(0.7898);"><u>T</u>ela da Calculadora</span>
<span class="t" style="left:291px;top:402.86px;font-size:7.91px;line-height:9.49px;font-weight:normal;color:#222;transform:scaleX(0.7859);"><u>G</u>erar Arquivo TXT</span>
<span class="t" style="left:386.2px;top:335.75px;font-size:7.91px;line-height:9.49px;font-weight:normal;color:#222;transform:scaleX(0.7773);"><u>I</u>mprimir de Jato Tinta</span>
<span class="t" style="left:392.5px;top:369.25px;font-size:7.91px;line-height:9.49px;font-weight:normal;color:#222;transform:scaleX(0.7562);"><u>I</u>mprimir em Cupom</span>
<span class="t" style="left:391.5px;top:402.86px;font-size:7.91px;line-height:9.49px;font-weight:normal;color:#222;transform:scaleX(0.7658);"><u>I</u>mprimir na Matricial</span>
<span class="t" style="left:506px;top:335.75px;font-size:7.91px;line-height:9.49px;font-weight:normal;color:#222;transform:scaleX(0.8054);"><u>S</u>ALVAR</span>
<span class="t" style="left:502.8px;top:369.25px;font-size:7.91px;line-height:9.49px;font-weight:normal;color:#222;transform:scaleX(0.7963);"><u>F</u>INALIZAR</span>
<span class="t" style="left:511px;top:402.86px;font-size:7.91px;line-height:9.49px;font-weight:normal;color:#222;transform:scaleX(0.7580);"><u>S</u>AIR</span>
<span class="t" style="left:572.4px;top:323.45px;font-size:7.91px;line-height:9.49px;font-weight:normal;color:#222;transform:scaleX(0.7554);">VALOR PRODUTOS</span>
<span class="t" style="left:572.4px;top:341.75px;font-size:7.91px;line-height:9.49px;font-weight:normal;color:#222;transform:scaleX(0.7608);">VALOR SERVICOS</span>
<span class="t" style="left:572.4px;top:359.56px;font-size:7.91px;line-height:9.49px;font-weight:normal;color:#222;transform:scaleX(0.7281);">DESLOCAMENTO</span>
<span class="t" style="left:572.4px;top:375.86px;font-size:7.91px;line-height:9.49px;font-weight:normal;color:#222;transform:scaleX(0.7163);">DESCONTO</span>
<span class="t" style="left:638.6px;top:375.26px;font-size:7.23px;line-height:8.68px;font-weight:normal;color:#222;transform:scaleX(0.7481);">(-)</span>
<span class="t" style="left:567.5px;top:401.86px;font-size:7.91px;line-height:9.49px;font-weight:normal;color:#222;transform:scaleX(0.8459);">TOTAL R$</span>
<span class="t" style="left:663.5px;top:321.64px;font-size:10.6px;line-height:12.72px;font-weight:bold;color:#000;transform:scaleX(0.8867);">27.000,00</span>
<span class="t" style="left:687.3px;top:339.64px;font-size:10.6px;line-height:12.72px;font-weight:bold;color:#000;transform:scaleX(0.8727);">0,00</span>
<span class="t" style="left:687.3px;top:357.64px;font-size:10.6px;line-height:12.72px;font-weight:bold;color:#000;transform:scaleX(0.8727);">0,00</span>
<span class="t" style="left:687.3px;top:374.94px;font-size:10.6px;line-height:12.72px;font-weight:bold;color:#e8202a;transform:scaleX(0.8727);">0,00</span>
<span class="t" style="left:634.6px;top:392.6px;font-size:23.0px;line-height:27.6px;font-weight:bold;color:#1a0a8c;transform:scaleX(0.6938);">27.000,00</span>
</div>
</body>
</html>
